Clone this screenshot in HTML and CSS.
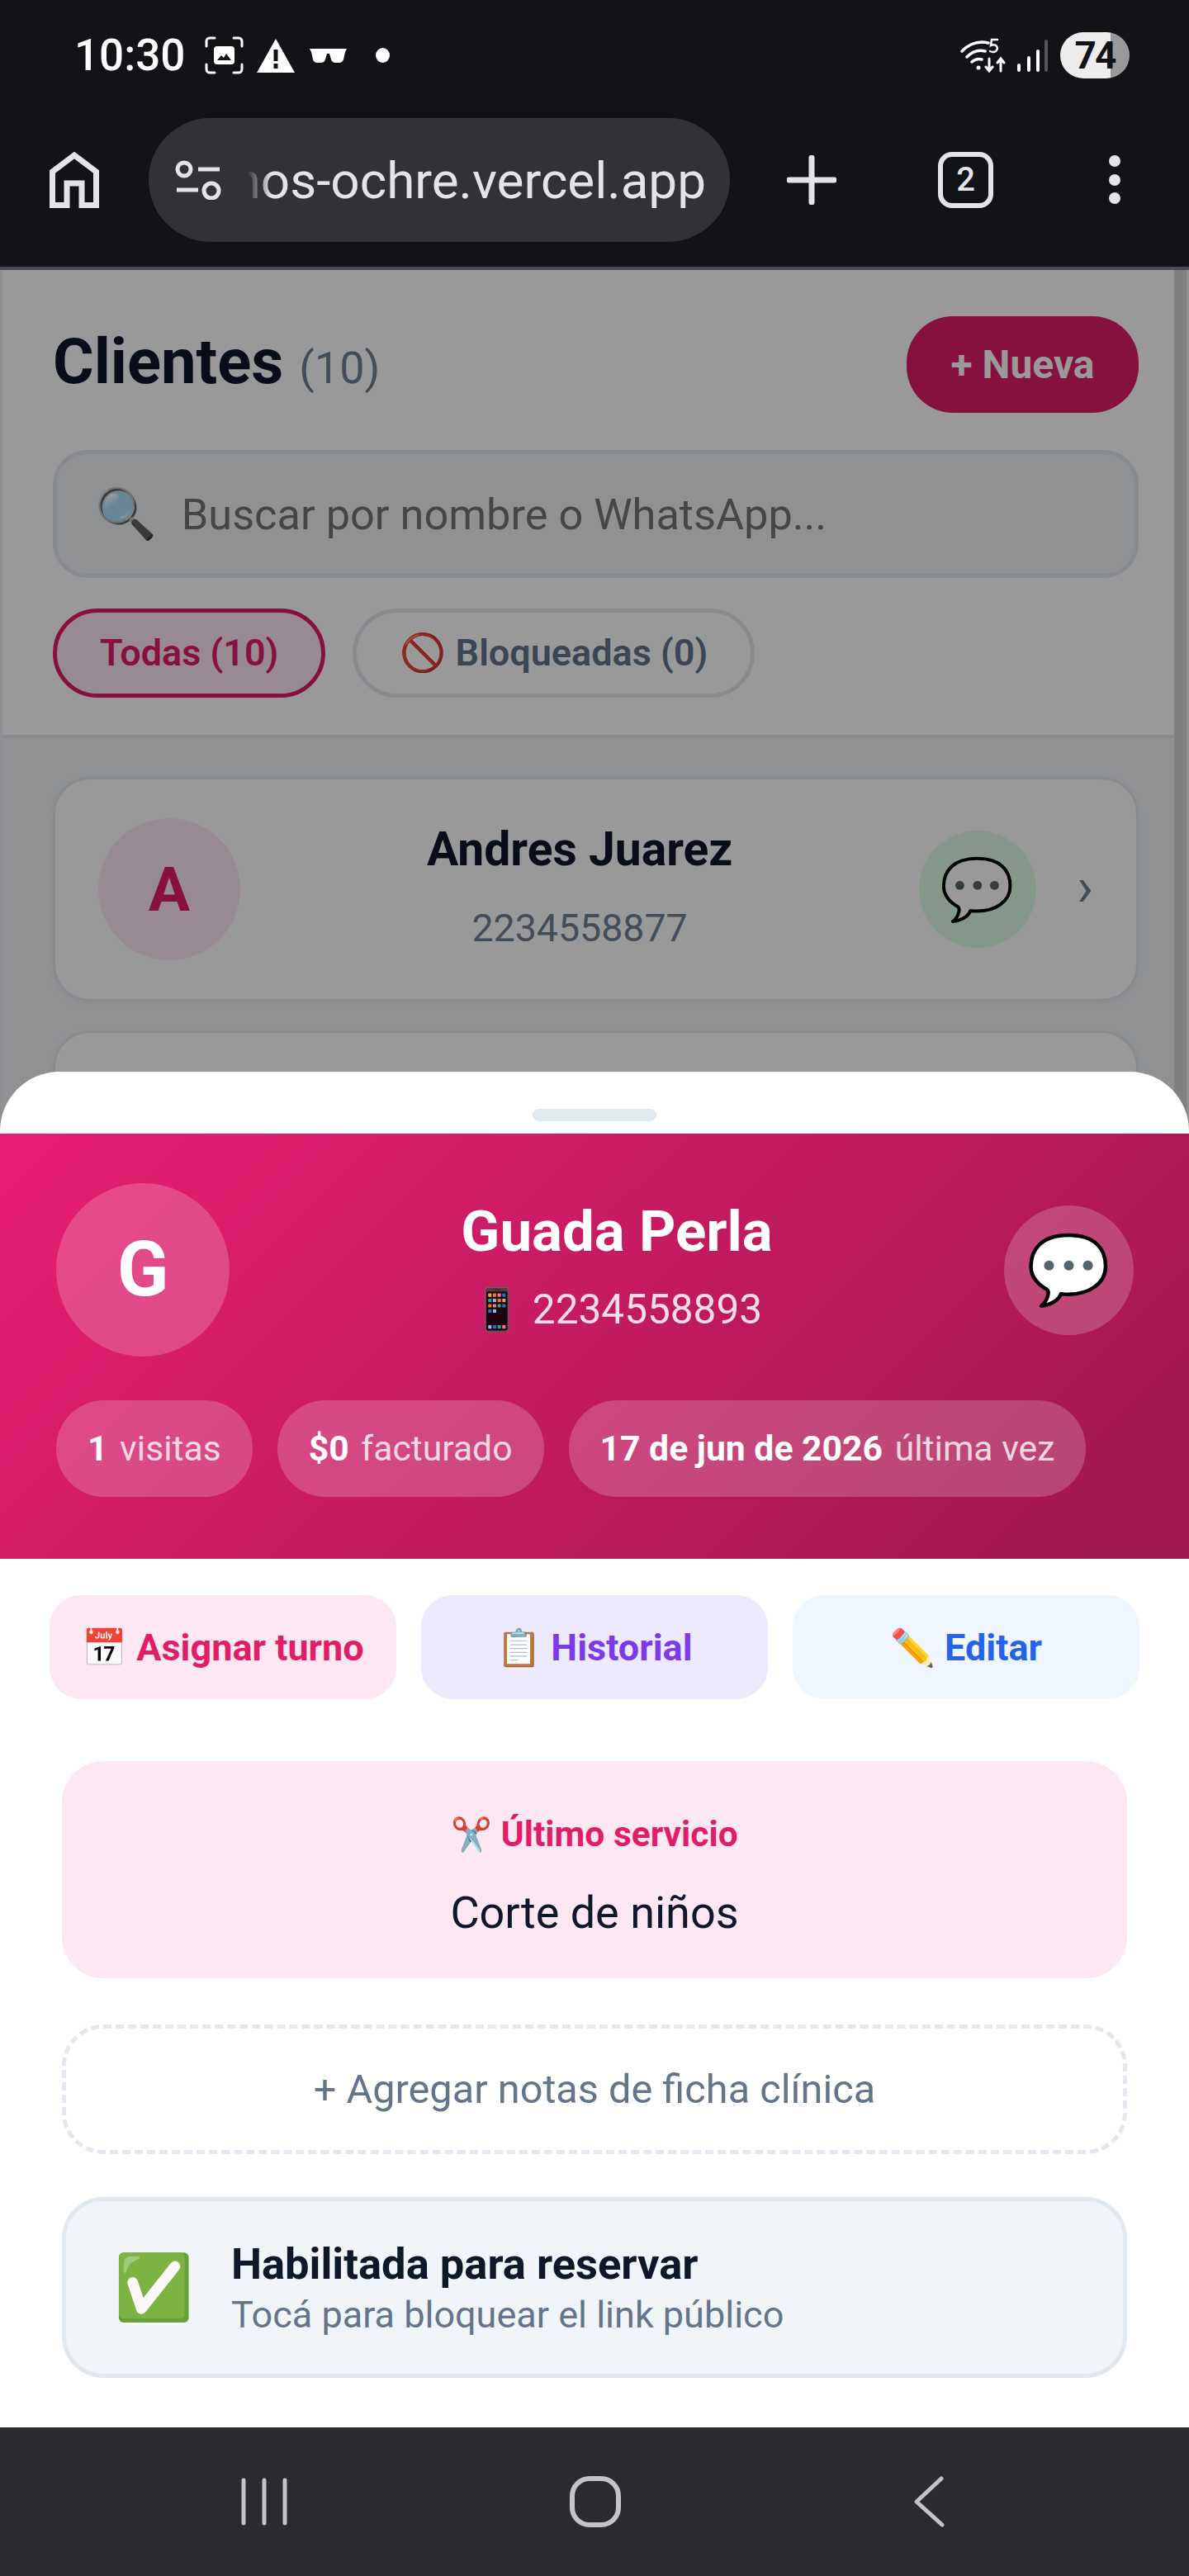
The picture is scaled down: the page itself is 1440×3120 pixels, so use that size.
FILE: index.html
```html
<!DOCTYPE html>
<html lang="es">
<head>
    <meta charset="UTF-8">
    <title>Clientes</title>
    <link rel="stylesheet" href="styles.css">
</head>
<body>
    <div class="phone">
        <div class="chrome">
            <div class="status-bar">
                <span class="clock">10:30</span>
                <svg class="st-shot" viewBox="0 0 47 46" fill="none" stroke="#fff" stroke-width="3" stroke-linecap="round"><path d="M2 12V6a4 4 0 0 1 4-4h6M35 2h6a4 4 0 0 1 4 4v6M45 34v6a4 4 0 0 1-4 4h-6M12 44H6a4 4 0 0 1-4-4v-6"/><rect x="11" y="12" width="25" height="22" rx="4" fill="#fff" stroke="none"/><path d="M15 29l5-6 3 3 3-5 6 8z" fill="#121317" stroke="none"/></svg>
                <svg class="st-warn" viewBox="0 0 46 41"><path d="M23 0L46 41H0z" fill="#fff"/><rect x="20.500" y="13" width="5" height="14" fill="#121317"/><rect x="20.500" y="30" width="5" height="6" fill="#121317"/></svg>
                <svg class="st-glasses" viewBox="0 0 45 17"><path d="M0 0h45l-2 4-2 9q-1 4-6 4h-3q-5 0-6-4l-2-7h-3l-2 7q-1 4-6 4h-3q-5 0-6-4L2 4z" fill="#fff"/></svg>
                <span class="st-dot"></span>
                <span class="status-gap"></span>
                <svg class="st-wifi" viewBox="0 0 57 42" fill="none" stroke="#fff" stroke-width="3.500" stroke-linecap="round"><path d="M2 16Q16 2 34 6M8 23Q18 13 30 16M14 29Q20 24 26 26"/><circle cx="22" cy="36" r="2.500" fill="#fff" stroke="none"/><path d="M35 25v15M31 35l4 5 4-5M49 40V25M45 30l4-5 4 5" stroke-width="3"/><path d="M45 2h-7l-1 7q5-2 7 1t-1 6q-3 2-7 0" stroke-width="2.500"/></svg>
                <svg class="st-signal" viewBox="0 0 37 39" fill="none" stroke-width="4" stroke-linecap="round"><path d="M2 37v-6M14 37V22M25 37V14" stroke="#fff"/><path d="M35 37V2" stroke="#55565c"/></svg>
                <span class="battery">74</span>
            </div>
            <div class="browser-bar">
                <svg class="br-home" viewBox="0 0 60 68" fill="none" stroke="#e3e4e9" stroke-width="7"><path d="M3.500 64.500V24L30 4l26.500 20v40.500H39V38H21v26.500z"/></svg>
                <div class="url-pill">
                    <svg class="br-tune" viewBox="0 0 56 48" fill="none" stroke="#e3e4e9" stroke-width="5"><circle cx="11" cy="11" r="8"/><path d="M28 11h26M2 36h26"/><circle cx="44" cy="37" r="9"/></svg>
                    <div class="url-text"><span>anos-ochre.vercel.app</span></div>
                </div>
                <svg class="br-plus" viewBox="0 0 60 60" stroke="#e3e4e9" stroke-width="7" stroke-linecap="round"><path d="M30 3v54M3 30h54"/></svg>
                <span class="br-tabs">2</span>
                <span class="br-menu"><i></i><i></i><i></i></span>
            </div>
        </div>

        <div class="screen">
            <div class="page">
                <div class="page-inner">
                    <header class="page-head">
                        <div class="title-row">
                            <h1>Clientes <small>(10)</small></h1>
                            <button class="btn-new">+ Nueva</button>
                        </div>
                        <div class="search"><span class="emoji">🔍</span><span class="search-hint">Buscar por nombre o WhatsApp...</span></div>
                        <div class="filters">
                            <span class="filter active">Todas (10)</span>
                            <span class="filter"><span class="emoji">🚫</span> Bloqueadas (0)</span>
                        </div>
                    </header>
                    <div class="list">
                        <div class="card">
                            <div class="card-avatar">A</div>
                            <div class="card-info">
                                <div class="card-name">Andres Juarez</div>
                                <div class="card-phone">2234558877</div>
                            </div>
                            <div class="card-wa emoji">💬</div>
                            <div class="card-arrow">›</div>
                        </div>
                        <div class="card"></div>
                    </div>
                </div>
            </div>
            <div class="overlay"></div>

            <section class="sheet">
                <div class="handle"></div>
                <div class="profile">
                    <div class="profile-top">
                        <div class="profile-avatar">G</div>
                        <div class="profile-info">
                            <div class="profile-name">Guada Perla</div>
                            <div class="profile-phone"><span class="emoji">📱</span> 2234558893</div>
                        </div>
                        <div class="profile-wa emoji">💬</div>
                    </div>
                    <div class="stats">
                        <span class="stat"><b>1</b> visitas</span>
                        <span class="stat"><b>$0</b> facturado</span>
                        <span class="stat"><b>17 de jun de 2026</b> última vez</span>
                    </div>
                </div>
                <div class="actions">
                    <button class="action pink"><span class="emoji">📅</span> Asignar turno</button>
                    <button class="action violet"><span class="emoji">📋</span> Historial</button>
                    <button class="action blue"><span class="emoji">✏️</span> Editar</button>
                </div>
                <div class="sheet-body">
                    <div class="service">
                        <div class="service-label"><span class="emoji">✂️</span> Último servicio</div>
                        <div class="service-name">Corte de niños</div>
                    </div>
                    <div class="add-notes">+ Agregar notas de ficha clínica</div>
                    <div class="toggle">
                        <span class="toggle-icon emoji">✅</span>
                        <div>
                            <div class="toggle-title">Habilitada para reservar</div>
                            <div class="toggle-sub">Tocá para bloquear el link público</div>
                        </div>
                    </div>
                </div>
            </section>
        </div>

        <nav class="nav-bar">
            <svg class="nav-recent" viewBox="0 0 56 58" stroke="#c4c4c6" stroke-width="5" stroke-linecap="round"><path d="M3 3v52M28 3v52M53 3v52"/></svg>
            <svg class="nav-home" viewBox="0 0 62 62" fill="none" stroke="#c4c4c6" stroke-width="6"><rect x="3" y="3" width="56" height="56" rx="21"/></svg>
            <svg class="nav-back" viewBox="0 0 40 62" fill="none" stroke="#c4c4c6" stroke-width="5" stroke-linecap="round" stroke-linejoin="round"><path d="M35 3L5 31l31 28"/></svg>
        </nav>
    </div>
</body>
</html>
```

FILE: styles.css
```css
* {
    box-sizing: border-box;
}

body {
    margin: 0;
    font-family: Roboto, sans-serif;
    color: #0f172a;
    background: #121317;
}

button {
    font-family: inherit;
    border: none;
}

.emoji {
    font-family: "Noto Color Emoji", Roboto, sans-serif;
    font-weight: 400;
}

.phone {
    width: 1440px;
    height: 3120px;
    display: flex;
    flex-direction: column;
    overflow: hidden;
}

/* status bar + browser bar */
.chrome {
    height: 327px;
    flex: none;
    background: #121317;
    border-bottom: 4px solid #4a4b55;
}

.status-bar {
    height: 134px;
    padding: 0 72px 0 90px;
    display: flex;
    align-items: center;
    color: #fff;
}

.clock {
    font-size: 53px;
    font-weight: 500;
    width: 158px;
}

.st-shot { width: 47px; height: 46px; }
.st-warn { width: 46px; height: 41px; margin-left: 16px; }
.st-glasses { width: 45px; height: 17px; margin-left: 18px; }

.st-dot {
    width: 17px;
    height: 18px;
    margin-left: 35px;
    border-radius: 50%;
    background: #fff;
}

.status-gap { flex: 1; }
.st-wifi { width: 57px; height: 42px; }
.st-signal { width: 37px; height: 39px; margin-left: 12px; }

.battery {
    width: 84px;
    height: 56px;
    margin-left: 15px;
    border-radius: 28px;
    background: linear-gradient(90deg, #ededed 61px, #999 61px);
    color: #121317;
    font-size: 46px;
    font-weight: 700;
    letter-spacing: -2px;
    line-height: 56px;
    text-align: center;
}

.browser-bar {
    height: 159px;
    padding: 9px 0 0 60px;
    display: flex;
    align-items: flex-start;
}

.br-home { width: 60px; height: 68px; margin: 41px 0 0; flex: none; }

.url-pill {
    width: 704px;
    height: 150px;
    margin-left: 60px;
    padding-left: 32px;
    border-radius: 75px;
    background: #313236;
    display: flex;
    align-items: center;
    flex: none;
}

.br-tune { width: 56px; height: 48px; flex: none; }

.url-text {
    width: 571px;
    margin-left: 16px;
    overflow: hidden;
    color: #e3e4e9;
    font-size: 62px;
    white-space: nowrap;
    direction: rtl;
    -webkit-mask-image: linear-gradient(90deg, transparent 16px, #000 44px);
    mask-image: linear-gradient(90deg, transparent 16px, #000 44px);
}

.url-text span { unicode-bidi: plaintext; }

.br-plus { width: 60px; height: 60px; margin: 45px 0 0 69px; flex: none; }

.br-tabs {
    width: 67px;
    height: 68px;
    margin: 41px 0 0 123px;
    border: 6px solid #e3e4e9;
    border-radius: 17px;
    color: #e3e4e9;
    font-size: 40px;
    font-weight: 500;
    line-height: 56px;
    text-align: center;
    flex: none;
}

.br-menu {
    width: 14px;
    margin: 45px 0 0 140px;
    display: flex;
    flex-direction: column;
    gap: 8.500px;
}

.br-menu i {
    width: 14px;
    height: 14px;
    border-radius: 50%;
    background: #e3e4e9;
}

/* page behind the sheet */
.screen {
    position: relative;
    flex: 1;
    overflow: hidden;
    background: #f0f2f5;
}

.page {
    border-left: 3px solid #ebeef3;
    border-right: 3px solid #ebeef3;
}

.page-inner {
    border-right: 15px solid #d4d4d4;
}

.page-head {
    height: 567px;
    padding: 56px 43px 0 61px;
    background: #fff;
    border-bottom: 4px solid #e2e8f0;
}

.title-row {
    display: flex;
    align-items: center;
    justify-content: space-between;
}

h1 {
    margin: 0 0 8px;
    font-size: 76px;
    font-weight: 700;
}

h1 small {
    color: #718096;
    font-size: 54px;
    font-weight: 400;
}

.btn-new {
    width: 281px;
    height: 117px;
    border-radius: 56px;
    background: #e11d68;
    color: #fff;
    font-size: 48px;
    font-weight: 700;
}

.search {
    height: 155px;
    margin-top: 45px;
    padding: 0 46px;
    border: 5px solid #e2e8f0;
    border-radius: 42px;
    background: #f0f2f5;
    display: flex;
    align-items: center;
    gap: 30px;
    font-size: 52.300px;
}

.search .emoji { font-size: 60px; }
.search-hint { color: #757575; }

.filters {
    margin-top: 37px;
    display: flex;
    gap: 33px;
}

.filter {
    height: 108px;
    padding: 0 52px;
    border: 5px solid #e2e8f0;
    border-radius: 54px;
    color: #64748b;
    font-size: 45px;
    font-weight: 600;
    line-height: 98px;
    white-space: nowrap;
}

.filter.active {
    border-color: #e11d68;
    background: #fce7f3;
    color: #e11d68;
}

.list {
    padding: 47px 43px 47px 61px;
    display: flex;
    flex-direction: column;
    gap: 35px;
}

.card {
    height: 272px;
    flex: none;
    padding: 0 52px;
    border: 3px solid #e2e8f0;
    border-radius: 45px;
    background: #fff;
    box-shadow: 0 3px 10px rgba(0, 0, 0, 0.04);
    display: flex;
    align-items: center;
}

.card-avatar {
    width: 172px;
    height: 172px;
    border-radius: 50%;
    background: #fce7f3;
    color: #e11d68;
    font-size: 75px;
    font-weight: 700;
    line-height: 172px;
    text-align: center;
    flex: none;
}

.card-info {
    flex: 1;
    padding-bottom: 8px;
    text-align: center;
}

.card-name {
    font-size: 57px;
    font-weight: 700;
}

.card-phone {
    margin-top: 35px;
    color: #718096;
    font-size: 46.500px;
}

.card-wa {
    width: 142px;
    height: 142px;
    border-radius: 50%;
    background: #dcfce7;
    font-size: 73px;
    line-height: 142px;
    text-align: center;
    flex: none;
}

.card-arrow {
    margin: 0 0 6px 49px;
    color: #718096;
    font-size: 66px;
}

.overlay {
    position: absolute;
    inset: 0;
    background: rgba(0, 0, 0, 0.4);
}

/* bottom sheet */
.sheet {
    position: absolute;
    left: 0;
    right: 0;
    top: 971px;
    bottom: 0;
    border-radius: 72px 72px 0 0;
    background: #fff;
    overflow: hidden;
}

.handle {
    width: 150px;
    height: 15px;
    margin: 45px auto 15px;
    border-radius: 8px;
    background: #e2e8f0;
}

.profile {
    height: 515px;
    padding: 60px 67px 0 68px;
    background: linear-gradient(135deg, #e91e73, #9d174d);
    color: #fff;
}

.profile-top {
    display: flex;
    align-items: center;
}

.profile-avatar {
    width: 210px;
    height: 210px;
    border-radius: 50%;
    background: rgba(255, 255, 255, 0.2);
    font-size: 92px;
    font-weight: 700;
    line-height: 210px;
    text-align: center;
    flex: none;
}

.profile-info {
    flex: 1;
    padding-bottom: 10px;
    text-align: center;
}

.profile-name {
    font-size: 69px;
    font-weight: 700;
}

.profile-phone {
    margin-top: 25px;
    color: rgba(255, 255, 255, 0.85);
    font-size: 49.500px;
}

.profile-wa {
    width: 157px;
    height: 157px;
    border-radius: 50%;
    background: rgba(255, 255, 255, 0.2);
    font-size: 82px;
    line-height: 157px;
    text-align: center;
    flex: none;
}

.stats {
    margin-top: 53px;
    display: flex;
    gap: 30px;
}

.stat {
    height: 117px;
    padding: 0 38px;
    border-radius: 58px;
    background: rgba(255, 255, 255, 0.2);
    color: rgba(255, 255, 255, 0.8);
    font-size: 42.700px;
    line-height: 117px;
    white-space: nowrap;
}

.stat b {
    margin-right: 4px;
    color: #fff;
    font-weight: 700;
}

.actions {
    padding: 44px 60px 0;
    display: grid;
    grid-template-columns: repeat(3, 1fr);
    gap: 30px;
}

.action {
    height: 126px;
    padding: 0;
    border-radius: 38px;
    font-size: 45px;
    font-weight: 700;
    white-space: nowrap;
}

.action .emoji { font-size: 44px; }

.action.pink { background: #fce7f3; color: #e11d68; }
.action.violet { background: #ede9fe; color: #7c3aed; }
.action.blue { background: #eff6ff; color: #2563eb; }

.sheet-body {
    padding: 75px 75px 0;
    display: flex;
    flex-direction: column;
    gap: 52px;
}

.service {
    height: 263px;
    padding-top: 64px;
    border-radius: 50px;
    background: #fce7f3;
    text-align: center;
}

.service-label {
    color: #e11d68;
    font-size: 42.500px;
    font-weight: 700;
}

.service-label .emoji { font-size: 40px; }

.service-name {
    margin-top: 39px;
    color: #0f172a;
    font-size: 54px;
}

.add-notes {
    height: 157px;
    margin-top: 4px;
    border: 5px dashed #e2e8f0;
    border-radius: 50px;
    color: #64748b;
    font-size: 48.700px;
    line-height: 147px;
    text-align: center;
}

.toggle {
    height: 219px;
    padding: 0 58px;
    border: 5px solid #e2e8f0;
    border-radius: 50px;
    background: #f1f5f9;
    display: flex;
    align-items: center;
    gap: 46px;
}

.toggle-icon { font-size: 77px; }

.toggle-title {
    font-size: 52.500px;
    font-weight: 700;
}

.toggle-sub {
    margin-top: 4px;
    color: #64748b;
    font-size: 45px;
}

.nav-bar {
    height: 180px;
    flex: none;
    background: #2a2b30;
    display: flex;
    align-items: center;
}

.nav-recent { width: 56px; height: 58px; margin-left: 292px; }
.nav-home { width: 62px; height: 62px; margin-left: 342px; }
.nav-back { width: 40px; height: 62px; margin-left: 353px; }
```
